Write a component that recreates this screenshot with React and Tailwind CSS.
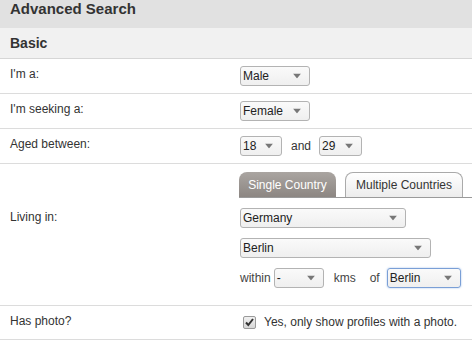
import React from "react";

function Arrow() {
  return (
    <svg width="8" height="5" viewBox="0 0 8 5" className="absolute right-[8px] top-1/2 -translate-y-1/2">
      <polygon points="0,0 8,0 4,5" fill="#777" />
    </svg>
  );
}

function Select({ value, w, focus }) {
  return (
    <div
      className={
        "relative h-[20px] rounded-[3px] border bg-gradient-to-b from-[#fafafa] to-[#efefef] pl-[2px] text-[12px] leading-[18px] text-[#222] " +
        (focus ? "border-[#7a9fd6] shadow-[0_0_2px_#9bbbe8]" : "border-[#b3b3b3]")
      }
      style={{ width: w }}
    >
      {value}
      <Arrow />
    </div>
  );
}

function Row({ label, children, labelPad = "pt-[7px]", rowClass = "" }) {
  return (
    <div className={"flex border-b border-[#dcdcdc] " + rowClass}>
      <div className={"w-[240px] shrink-0 pl-[10px] text-[12px] leading-[16px] text-[#333] " + labelPad}>{label}</div>
      <div className="flex-1">{children}</div>
    </div>
  );
}

export default function App() {
  return (
    <div className="h-[341px] w-[472px] overflow-hidden bg-white" style={{ fontFamily: "'Liberation Sans', Arial, sans-serif" }}>
      <div className="h-[28px] bg-[#e1e1e1] pl-[10px] text-[15px] font-bold leading-[18px] text-[#333]">Advanced Search</div>
      <div className="flex h-[31px] items-center border-b border-[#d6d6d6] bg-[#f1f1f1] pl-[10px] text-[14px] font-bold text-[#333]">
        Basic
      </div>
      <Row label="I'm a:">
        <div className="py-[7px]">
          <Select value="Male" w={70} />
        </div>
      </Row>
      <Row label="I'm seeking a:">
        <div className="py-[7px]">
          <Select value="Female" w={70} />
        </div>
      </Row>
      <Row label="Aged between:">
        <div className="flex items-center py-[7px] text-[12px] text-[#333]">
          <Select value="18" w={42} />
          <span className="ml-[9px] mr-[8px]">and</span>
          <Select value="29" w={43} />
        </div>
      </Row>
      <Row label="Living in:" labelPad="pt-[45px]">
        <div className="pt-[8px] pb-[17px]">
          <div className="-ml-[1px] flex h-[26px] items-end gap-[9px] border-b border-[#9a9a9a]">
            <div className="flex h-[25px] w-[97px] items-center justify-center rounded-t-[8px] bg-gradient-to-b from-[#aaa5a1] to-[#8c8682] text-[12px] text-white">
              Single Country
            </div>
            <div className="flex h-[25px] w-[118px] items-center justify-center rounded-t-[8px] border border-b-0 border-[#aaa] bg-gradient-to-b from-white to-[#ececec] text-[12px] text-[#333]">
              Multiple Countries
            </div>
          </div>
          <div className="mt-[10px]">
            <Select value="Germany" w={166} />
          </div>
          <div className="mt-[10px]">
            <Select value="Berlin" w={191} />
          </div>
          <div className="mt-[10px] flex items-center text-[12px] text-[#444]">
            <span>within</span>
            <div className="ml-[3px]">
              <Select value="-" w={50} />
            </div>
            <span className="ml-[10px]">kms</span>
            <span className="ml-[14px]">of</span>
            <div className="ml-[7px]">
              <Select value="Berlin" w={74} focus />
            </div>
          </div>
        </div>
      </Row>
      <Row label="Has photo?">
        <div className="flex items-center py-[7px] pl-[3px] text-[12px] leading-[19px] text-[#333]">
          <svg width="13" height="13" viewBox="0 0 13 13" className="shrink-0">
            <defs>
              <linearGradient id="cbg" x1="0" y1="0" x2="0" y2="1">
                <stop offset="0" stopColor="#f2f2f2" />
                <stop offset="1" stopColor="#d6d6d6" />
              </linearGradient>
            </defs>
            <rect x="0.5" y="0.5" width="12" height="12" rx="1.5" fill="url(#cbg)" stroke="#9a9a9a" />
            <path d="M3 6.5 L5.3 9 L10 3" fill="none" stroke="#333" strokeWidth="2" />
          </svg>
          <span className="ml-[8px]">Yes, only show profiles with a photo.</span>
        </div>
      </Row>
    </div>
  );
}
